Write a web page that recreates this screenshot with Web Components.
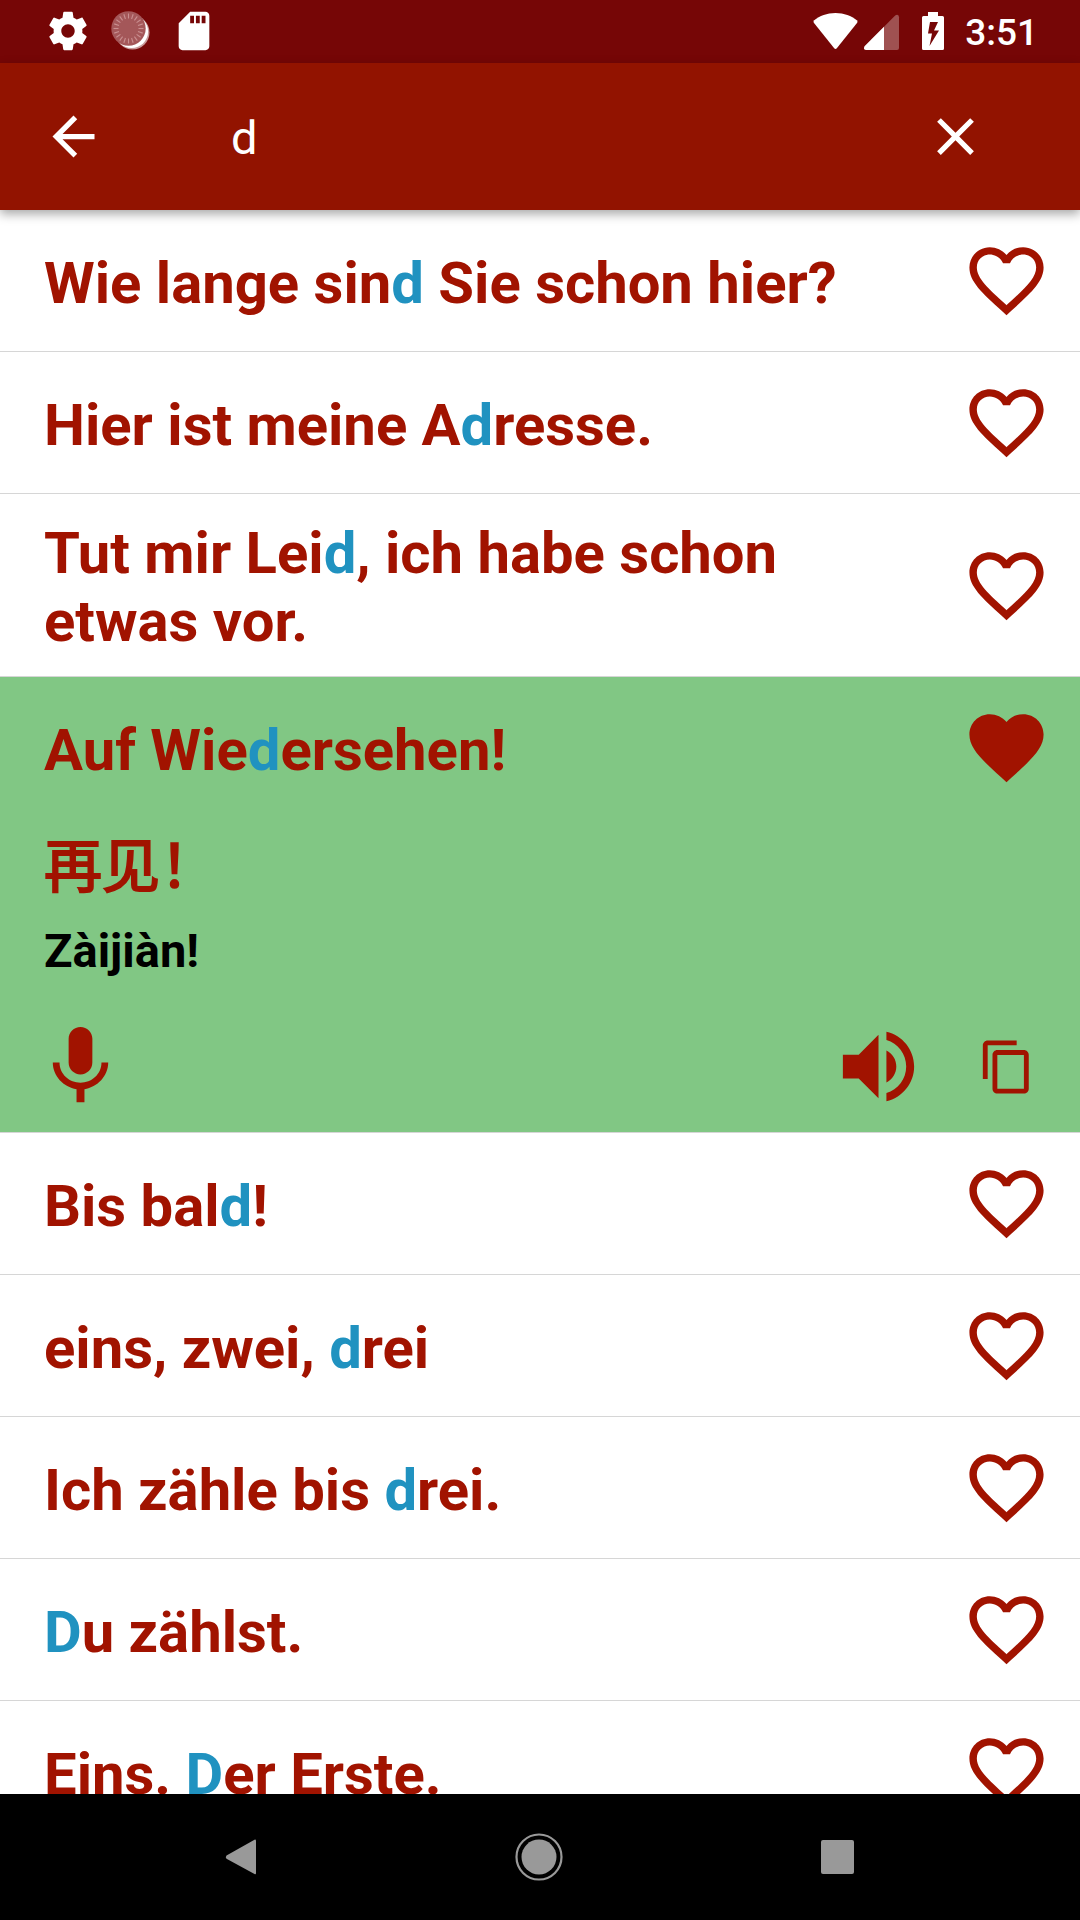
<!DOCTYPE html>
<html lang="de">
<head>
<meta charset="utf-8">
<meta name="viewport" content="width=device-width, initial-scale=1">
<title>Sprachführer</title>
<style>
  html, body { margin: 0; }
  body { background: #fff; font-family: Roboto, "Noto Sans CJK SC", sans-serif; }
</style>
</head>
<body>
<phrase-app>
  <phrase-row>Wie lange sin<mark>d</mark> Sie schon hier?</phrase-row>
  <phrase-row>Hier ist meine A<mark>d</mark>resse.</phrase-row>
  <phrase-row>Tut mir Lei<mark>d</mark>, ich habe schon etwas vor.</phrase-row>
  <phrase-row open favorite>Auf Wie<mark>d</mark>ersehen!<span slot="translation" lang="zh-CN">再见！</span><span slot="reading" lang="zh-Latn">Zàijiàn!</span></phrase-row>
  <phrase-row>Bis bal<mark>d</mark>!</phrase-row>
  <phrase-row>eins, zwei, <mark>d</mark>rei</phrase-row>
  <phrase-row>Ich zähle bis <mark>d</mark>rei.</phrase-row>
  <phrase-row><mark>D</mark>u zählst.</phrase-row>
  <phrase-row>Eins. <mark>D</mark>er Erste.</phrase-row>
</phrase-app>

<script>
const ticks = Array.from({ length: 20 }, (_, i) =>
  `<path d="M20.5 5.5v5" transform="rotate(${i * 18} 20.5 20.5)"/>`).join('');

const ICONS = {
  gear: ['0 0 24 24', '<path d="M19.43 12.98c.04-.32.07-.64.07-.98s-.03-.66-.07-.98l2.11-1.65c.19-.15.24-.42.12-.64l-2-3.46c-.12-.22-.39-.3-.61-.22l-2.49 1c-.52-.4-1.08-.73-1.69-.98l-.38-2.65C14.46 2.18 14.25 2 14 2h-4c-.25 0-.46.18-.49.42l-.38 2.65c-.61.25-1.17.59-1.69.98l-2.49-1c-.23-.09-.49 0-.61.22l-2 3.46c-.13.22-.07.49.12.64l2.11 1.65c-.04.32-.07.65-.07.98s.03.66.07.98l-2.11 1.65c-.19.15-.24.42-.12.64l2 3.46c.12.22.39.3.61.22l2.49-1c.52.4 1.08.73 1.69.98l.38 2.65c.03.24.24.42.49.42h4c.25 0 .46-.18.49-.42l.38-2.65c.61-.25 1.17-.59 1.69-.98l2.49 1c.23.09.49 0 .61-.22l2-3.46c.12-.22.07-.49-.12-.64l-2.11-1.65zM12 15.5c-1.93 0-3.5-1.57-3.5-3.5s1.57-3.5 3.5-3.5 3.5 1.57 3.5 3.5-1.57 3.5-3.5 3.5z"/>'],
  dial: ['0 0 46 46', `<circle cx="24.5" cy="24.5" r="17" opacity=".6"/><circle cx="23.5" cy="23.5" r="16.6"/><circle cx="20.5" cy="20.5" r="17.2" fill="#a45759"/><g fill="none" stroke="#c98f90" stroke-width="1.1">${ticks}</g>`],
  sd: ['0 0 24 24', '<path d="M18 2h-8L4.02 8 4 20c0 1.1.9 2 2 2h12c1.1 0 2-.9 2-2V4c0-1.1-.9-2-2-2zm-6 6h-2V4h2v4zm3 0h-2V4h2v4zm3 0h-2V4h2v4z"/>'],
  wifi: ['0 0 46 46', '<path d="M22.500 5C14 5 6.500 8 1.200 12.300Q0 13.400 .800 14.800L21 40Q22.500 41.800 24 40L44.200 14.800Q45 13.400 43.800 12.300C38.500 8 31 5 22.500 5z"/>'],
  signal: ['0 0 46 46', '<path opacity=".3" d="M40 9.200Q40 6.700 38.200 6.700 37 6.700 36.200 7.500L5.800 38Q5 39 5 40.200 5 42 7 42H38Q40 42 40 40z"/><path d="M25 18.800L5.800 38Q5 39 5 40.200 5 42 7 42H25z"/>'],
  battery: ['0 0 46 46', '<path fill-rule="evenodd" d="M18 4h10v4h4.500Q34 8 34 9.500v31Q34 42 32.500 42h-19Q12 42 12 40.500v-31Q12 8 13.500 8H18zM20 14l-2 11.500h4L19.500 38 29 22.500h-5L28 14z"/>'],
  back: ['0 0 24 24', '<path d="M20 11H7.830l5.590-5.590L12 4l-8 8 8 8 1.410-1.410L7.830 13H20v-2z"/>'],
  close: ['0 0 24 24', '<path d="M19 6.410L17.590 5 12 10.590 6.410 5 5 6.410 10.590 12 5 17.590 6.410 19 12 13.410 17.590 19 19 17.590 13.410 12z"/>'],
  heart: ['0 0 24 24', '<path d="M12 21.350l-1.450-1.320C5.400 15.360 2 12.280 2 8.500 2 5.420 4.420 3 7.500 3c1.740 0 3.410.81 4.500 2.090C13.090 3.810 14.760 3 16.500 3 19.580 3 22 5.420 22 8.500c0 3.780-3.400 6.860-8.550 11.540L12 21.350z"/>'],
  heartOutline: ['0 0 24 24', '<path d="M16.500 3c-1.740 0-3.410.81-4.500 2.090C10.910 3.810 9.240 3 7.500 3 4.420 3 2 5.420 2 8.500c0 3.780 3.400 6.860 8.550 11.540L12 21.350l1.450-1.320C18.600 15.360 22 12.280 22 8.500 22 5.420 19.580 3 16.500 3zm-4.400 15.550l-.1.1-.1-.1C7.140 14.240 4 11.390 4 8.500 4 6.500 5.500 5 7.500 5c1.540 0 3.040.99 3.570 2.360h1.870C13.460 5.990 14.960 5 16.500 5c2 0 3.500 1.500 3.500 3.500 0 2.890-3.140 5.740-7.900 10.050z"/>'],
  mic: ['0 0 24 24', '<path d="M12 14c1.660 0 2.990-1.340 2.990-3L15 5c0-1.660-1.340-3-3-3S9 3.340 9 5v6c0 1.660 1.340 3 3 3zm5.300-3c0 3-2.540 5.100-5.300 5.100S6.700 14 6.700 11H5c0 3.410 2.720 6.230 6 6.720V21h2v-3.280c3.280-.48 6-3.300 6-6.720h-1.700z"/>'],
  speaker: ['0 0 24 24', '<path d="M3 9v6h4l5 5V4L7 9H3zm13.500 3c0-1.770-1.020-3.290-2.500-4.030v8.050c1.480-.73 2.500-2.250 2.500-4.020zM14 3.230v2.060c2.890.86 5 3.540 5 6.710s-2.110 5.850-5 6.710v2.060c4.010-.91 7-4.490 7-8.770s-2.990-7.860-7-8.770z"/>'],
  copy: ['0 0 24 24', '<path d="M16 1H4c-1.100 0-2 .9-2 2v14h2V3h12V1zm3 4H8c-1.100 0-2 .9-2 2v14c0 1.100.9 2 2 2h11c1.100 0 2-.9 2-2V7c0-1.100-.9-2-2-2zm0 16H8V7h11v14z"/>'],
  navBack: ['0 0 48 48', '<path d="M38.500 6.700Q40 6.300 40 8v32Q40 42 38.500 41L10.500 25.800Q9 24.300 10.500 22.600z"/>'],
  navHome: ['0 0 48 48', '<circle cx="24" cy="24" r="17.500"/><circle cx="24" cy="24" r="22.500" fill="none" stroke="currentColor" stroke-width="2.200"/>'],
  navRecent: ['0 0 48 48', '<rect x="7" y="7" width="33" height="34" rx="2"/>']
};

class UiIcon extends HTMLElement {
  connectedCallback() {
    if (this.shadowRoot) return;
    const [box, art] = ICONS[this.getAttribute('name')];
    this.attachShadow({ mode: 'open' }).innerHTML = `
      <style>
        :host { display: block; width: var(--icon-size, 46px); height: var(--icon-size, 46px); }
        svg { display: block; width: 100%; height: 100%; fill: currentColor; }
      </style>
      <svg viewBox="${box}" aria-hidden="true">${art}</svg>`;
  }
}
customElements.define('ui-icon', UiIcon);

class StatusBar extends HTMLElement {
  constructor() {
    super();
    this.attachShadow({ mode: 'open' }).innerHTML = `
      <style>
        :host { display: flex; align-items: center; justify-content: space-between;
          box-sizing: border-box; height: 63px; padding: 0 42px 1px 45px;
          background: #760606; color: #fff; }
        div { display: flex; align-items: center; }
        .left { gap: 17px; }
        .right { gap: 5px; }
        .network { gap: 0; }
        time { font-size: 37px; line-height: 46px; font-weight: 500; padding: 4px 0 0 4px; }
      </style>
      <div class="left">
        <ui-icon name="gear"></ui-icon><ui-icon name="dial"></ui-icon><ui-icon name="sd"></ui-icon>
      </div>
      <div class="right">
        <div class="network"><ui-icon name="wifi"></ui-icon><ui-icon name="signal"></ui-icon></div>
        <ui-icon name="battery"></ui-icon>
        <time>3:51</time>
      </div>`;
  }
}
customElements.define('status-bar', StatusBar);

class SearchBar extends HTMLElement {
  constructor() {
    super();
    this.attachShadow({ mode: 'open' }).innerHTML = `
      <style>
        :host { display: flex; align-items: center; box-sizing: border-box; height: 147px;
          padding: 0 93px 0 42px; background: #921300; color: #fff;
          box-shadow: 0 4px 10px rgba(0, 0, 0, .35); --icon-size: 63px; }
        button { flex: none; border: 0; padding: 0; background: none; color: inherit; }
        input { flex: 1; min-width: 0; margin: 0 24px 0 126px; padding: 2px 0 0; border: 0; outline: 0;
          background: none; color: inherit; font: 400 47px/56px Roboto, sans-serif; }
      </style>
      <button aria-label="Zurück"><ui-icon name="back"></ui-icon></button>
      <input type="text" aria-label="Suche" value="d">
      <button aria-label="Löschen"><ui-icon name="close"></ui-icon></button>`;
  }
}
customElements.define('search-bar', SearchBar);

class PhraseRow extends HTMLElement {
  connectedCallback() {
    if (this.shadowRoot) return;
    const fav = this.hasAttribute('favorite');
    const details = this.hasAttribute('open') ? `
      <div class="details">
        <div class="translation"><slot name="translation"></slot></div>
        <div class="reading"><slot name="reading"></slot></div>
      </div>
      <div class="actions">
        <button aria-label="Aufnehmen"><ui-icon name="mic"></ui-icon></button>
        <span class="fill"></span>
        <button aria-label="Anhören"><ui-icon name="speaker"></ui-icon></button>
        <button class="copy" aria-label="Kopieren"><ui-icon name="copy"></ui-icon></button>
      </div>` : '';
    this.attachShadow({ mode: 'open' }).innerHTML = `
      <style>
        :host { display: block; flex: none; border-bottom: 1px solid #d6d6d6; color: #a11300;
          font-size: 58px; line-height: 68px; font-weight: 700; }
        :host([open]) { background: #81c784; }
        ::slotted(mark) { background: none; color: #2092c0; }
        .head { display: flex; align-items: center; min-height: 141px; padding-right: 29px; }
        .phrase { flex: 1; margin: 0; padding: 25px 45px 21px 44px; font: inherit; }
        button { flex: none; display: flex; align-items: center; justify-content: center;
          border: 0; padding: 0; background: none; color: inherit; }
        .head button { --icon-size: 89px; }
        .details { padding: 15px 44px 0; }
        .translation { font-weight: 400; -webkit-text-stroke: 2px currentColor; }
        .reading { margin-top: 22px; color: #000; font-size: 47px; line-height: 56px; }
        .actions { display: flex; align-items: center; margin-top: 40px; padding: 0 29px 18px 33px; --icon-size: 95px; }
        .fill { flex: 1; }
        .actions .copy { width: 89px; margin-left: 36px; --icon-size: 58px; }
      </style>
      <div class="head">
        <p class="phrase"><slot></slot></p>
        <button aria-label="Favorit" aria-pressed="${fav}"><ui-icon name="${fav ? 'heart' : 'heartOutline'}"></ui-icon></button>
      </div>${details}`;
  }
}
customElements.define('phrase-row', PhraseRow);

class NavBar extends HTMLElement {
  constructor() {
    super();
    this.attachShadow({ mode: 'open' }).innerHTML = `
      <style>
        :host { display: grid; grid-template-columns: repeat(3, 1fr); place-items: center;
          box-sizing: border-box; height: 126px; padding: 0 92px 1px 90px; background: #000; color: #999;
          --icon-size: 48px; }
        button { border: 0; padding: 0; background: none; color: inherit; }
      </style>
      <button aria-label="Zurück"><ui-icon name="navBack"></ui-icon></button>
      <button aria-label="Startseite"><ui-icon name="navHome"></ui-icon></button>
      <button aria-label="Übersicht"><ui-icon name="navRecent"></ui-icon></button>`;
  }
}
customElements.define('nav-bar', NavBar);

class PhraseApp extends HTMLElement {
  constructor() {
    super();
    this.attachShadow({ mode: 'open' }).innerHTML = `
      <style>
        :host { display: flex; flex-direction: column; height: 100vh; }
        status-bar, nav-bar { flex: none; }
        search-bar { flex: none; z-index: 1; }
        main { flex: 1; min-height: 0; display: flex; flex-direction: column;
          overflow-y: auto; scrollbar-width: none; }
      </style>
      <status-bar></status-bar>
      <search-bar></search-bar>
      <main><slot></slot></main>
      <nav-bar></nav-bar>`;
  }
}
customElements.define('phrase-app', PhraseApp);
</script>
</body>
</html>
